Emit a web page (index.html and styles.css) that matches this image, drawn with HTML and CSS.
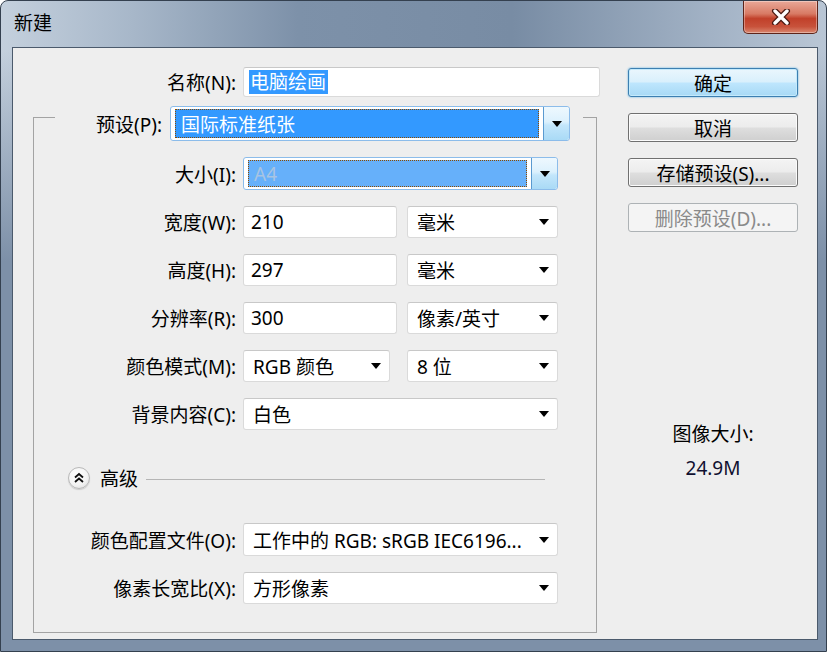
FILE: index.html
```html
<!DOCTYPE html>
<html lang="zh-CN">

<head>
    <meta charset="UTF-8">
    <title>新建</title>
    <link rel="stylesheet" href="styles.css">
</head>

<body>
    <div class="window">
        <div class="titlebar">
            <span class="title">新建</span>
            <div class="close">
                <svg width="22" height="16" viewBox="0 0 22 16">
                    <path d="M5 2 L17 14 M17 2 L5 14" stroke="#4a1a12" stroke-width="6" stroke-linecap="round" />
                    <path d="M5 2 L17 14 M17 2 L5 14" stroke="#fff" stroke-width="3.4" stroke-linecap="round" />
                </svg>
            </div>
        </div>

        <div class="client">
            <div class="form">
                <div class="row name-row">
                    <label class="lbl">名称(N):</label>
                    <div class="field name-field"><span class="sel-text">电脑绘画</span></div>
                </div>

                <fieldset class="group">
                    <legend>
                        <label class="lbl preset-lbl">预设(P):</label>
                        <div class="combo preset-combo">
                            <div class="combo-val">国际标准纸张</div>
                            <div class="drop-btn"><i class="arrow"></i></div>
                        </div>
                    </legend>

                    <div class="row tall">
                        <label class="lbl">大小(I):</label>
                        <div class="combo size-combo">
                            <div class="combo-val dim">A4</div>
                            <div class="drop-btn"><i class="arrow"></i></div>
                        </div>
                    </div>
                    <div class="row">
                        <label class="lbl">宽度(W):</label>
                        <div class="field num">210</div>
                        <div class="select unit">毫米<i class="arrow"></i></div>
                    </div>
                    <div class="row">
                        <label class="lbl">高度(H):</label>
                        <div class="field num">297</div>
                        <div class="select unit">毫米<i class="arrow"></i></div>
                    </div>
                    <div class="row">
                        <label class="lbl">分辨率(R):</label>
                        <div class="field num">300</div>
                        <div class="select unit">像素/英寸<i class="arrow"></i></div>
                    </div>
                    <div class="row">
                        <label class="lbl">颜色模式(M):</label>
                        <div class="select mode">RGB 颜色<i class="arrow"></i></div>
                        <div class="select unit bits">8 位<i class="arrow"></i></div>
                    </div>
                    <div class="row">
                        <label class="lbl">背景内容(C):</label>
                        <div class="select full">白色<i class="arrow"></i></div>
                    </div>

                    <div class="adv">
                        <span class="adv-btn">
                            <svg width="22" height="22" viewBox="0 0 22 22">
                                <path d="M7 10.5 L11 7 L15 10.5 M7 15 L11 11.5 L15 15" fill="none" stroke="#111" stroke-width="1.8" />
                            </svg>
                        </span>
                        <span class="adv-text">高级</span>
                        <span class="adv-line"></span>
                    </div>

                    <div class="row tall">
                        <label class="lbl">颜色配置文件(O):</label>
                        <div class="select full">工作中的 RGB: sRGB IEC6196...<i class="arrow"></i></div>
                    </div>
                    <div class="row">
                        <label class="lbl">像素长宽比(X):</label>
                        <div class="select full">方形像素<i class="arrow"></i></div>
                    </div>
                </fieldset>
            </div>

            <div class="side">
                <div class="btn default">确定</div>
                <div class="btn">取消</div>
                <div class="btn">存储预设(S)...</div>
                <div class="btn disabled">删除预设(D)...</div>

                <div class="info">
                    <div>图像大小:</div>
                    <div class="info-val">24.9M</div>
                </div>
            </div>
        </div>
    </div>
</body>

</html>
```

FILE: styles.css
```css
body {
    margin: 0;
    overflow: hidden;
    font-family: "Noto Sans", "Noto Sans CJK SC", sans-serif;
    font-size: 19px;
    color: #000;
}

.window {
    width: 827px;
    height: 652px;
    box-sizing: border-box;
    border: 1px solid #34404f;
    border-radius: 8px 8px 0 0;
    display: flex;
    flex-direction: column;
    background:
        linear-gradient(to bottom, rgba(125, 144, 168, 0) 50px, rgba(125, 144, 168, 1) 260px),
        linear-gradient(90deg, #c4d0dd 0%, #a7b7c9 16%, #7d91a9 36%, #788ca4 62%, #a2b2c5 86%, #b9c6d5 100%);
}

.titlebar {
    height: 46px;
    display: flex;
    justify-content: space-between;
    align-items: flex-start;
    padding-left: 13px;
}

.title {
    line-height: 44px;
}

.close {
    width: 75px;
    height: 33px;
    margin-right: 8px;
    box-sizing: border-box;
    border: 1px solid #5e2419;
    border-top: none;
    border-radius: 0 0 5px 5px;
    background: linear-gradient(to bottom, #e9a898 0%, #d87a64 40%, #c1402a 55%, #c8523b 80%, #d9876f 100%);
    box-shadow: inset 0 0 0 1px rgba(255, 255, 255, 0.35);
    display: flex;
    align-items: center;
    justify-content: center;
}

.client {
    flex: 1;
    margin: 0 8px 11px 11px;
    border: 1px solid #4b5a6c;
    background: #eeeeee;
    display: flex;
}

.form {
    width: 587px;
    padding-top: 19px;
}

.row {
    display: flex;
    align-items: center;
    height: 32px;
    margin-bottom: 16px;
}

.row.tall {
    height: 33px;
}

.lbl {
    width: 181px;
    margin-right: 7px;
    text-align: right;
    white-space: nowrap;
}

.name-row {
    height: 30px;
    margin-bottom: 0;
}

.name-row .lbl {
    width: 223px;
}

.field,
.select {
    height: 100%;
    box-sizing: border-box;
    background: #fff;
    border: 1px solid #dadada;
    border-top-color: #c8c8c8;
    border-radius: 3px;
    display: flex;
    align-items: center;
    white-space: nowrap;
}

.name-field {
    width: 357px;
    padding-left: 5px;
}

.sel-text {
    background: #3399ff;
    color: #fff;
    line-height: 24px;
    padding: 0 2px 0 1px;
}

.num {
    width: 154px;
    padding-left: 7px;
}

.select {
    padding-left: 9px;
}

.unit {
    width: 151px;
    margin-left: 10px;
}

.unit.bits {
    margin-left: 17px;
}

.mode {
    width: 147px;
}

.full {
    width: 315px;
}

.arrow {
    width: 0;
    height: 0;
    border-left: 5px solid transparent;
    border-right: 5px solid transparent;
    border-top: 6px solid #000;
}

.select .arrow {
    margin-left: auto;
    margin-right: 8px;
}

/* group box with the preset combo sitting on its top edge */
.group {
    margin: -3px 0 0 20px;
    width: 564px;
    min-width: 0;
    box-sizing: border-box;
    border: 1px solid #a3a3a3;
    padding: 16px 0 12px 21px;
}

legend {
    display: flex;
    align-items: center;
    padding: 12px 13px 0 0;
}

.preset-lbl {
    width: 107px;
    margin-right: 8px;
}

.combo {
    display: flex;
    box-sizing: border-box;
    background: #fff;
    border: 1px solid #8cbcea;
    border-radius: 3px;
    overflow: hidden;
}

.preset-combo {
    width: 400px;
    height: 35px;
}

.size-combo {
    width: 315px;
    height: 33px;
}

.combo-val {
    flex: 1;
    margin: 2px 4px 2px 4px;
    padding-left: 5px;
    border: 1px dotted #8a4a00;
    background: #3399ff;
    color: #fff;
    display: flex;
    align-items: center;
    white-space: nowrap;
}

.combo-val.dim {
    background: #66b0fa;
    color: #a8c4e2;
}

.drop-btn {
    width: 25px;
    border-left: 1px solid #5a9ad0;
    border-radius: 0 2px 2px 0;
    background: linear-gradient(to bottom, #eef8fe 0%, #dcf1fd 45%, #c3e6fb 55%, #a9daf6 100%);
    display: flex;
    align-items: center;
    justify-content: center;
}

.adv {
    display: flex;
    align-items: center;
    height: 24px;
    margin: 36px 0 33px 13px;
}

.adv-btn {
    width: 22px;
    height: 22px;
    border-radius: 50%;
    box-sizing: border-box;
    border: 1px solid #b9b9b9;
    background: radial-gradient(circle at 40% 35%, #ffffff 0%, #f4f4f4 55%, #d8d8d8 100%);
    box-shadow: 0 1px 1px rgba(0, 0, 0, 0.15);
    display: flex;
}

.adv-btn svg {
    margin: -1px;
}

.adv-text {
    margin-left: 10px;
}

.adv-line {
    flex: 1;
    height: 1px;
    background: #b5b5b5;
    margin: 2px 51px 0 8px;
}

.side {
    width: 170px;
    margin-left: 28px;
    padding-top: 20px;
}

.btn {
    height: 29px;
    box-sizing: border-box;
    margin-bottom: 16px;
    border: 1px solid #707070;
    border-radius: 3px;
    background: linear-gradient(to bottom, #f4f4f4 0%, #ececec 48%, #dedede 52%, #cfcfcf 100%);
    box-shadow: inset 0 0 0 1px #fbfbfb;
    display: flex;
    align-items: center;
    justify-content: center;
    white-space: nowrap;
}

.btn.default {
    border-color: #3c7fb1;
    background: linear-gradient(to bottom, #eaf6fd 0%, #d9f0fc 48%, #bee6fd 52%, #a7d9f5 100%);
    box-shadow: inset 0 0 0 1px #c4eafc, 0 0 2px #48a8e0;
}

.btn.disabled {
    border-color: #adb2b5;
    background: #f4f4f4;
    box-shadow: none;
    color: #8a8a8a;
}

.info {
    margin-top: 190px;
    text-align: center;
    line-height: 24px;
}

.info-val {
    margin-top: 10px;
    color: #101030;
}
```
